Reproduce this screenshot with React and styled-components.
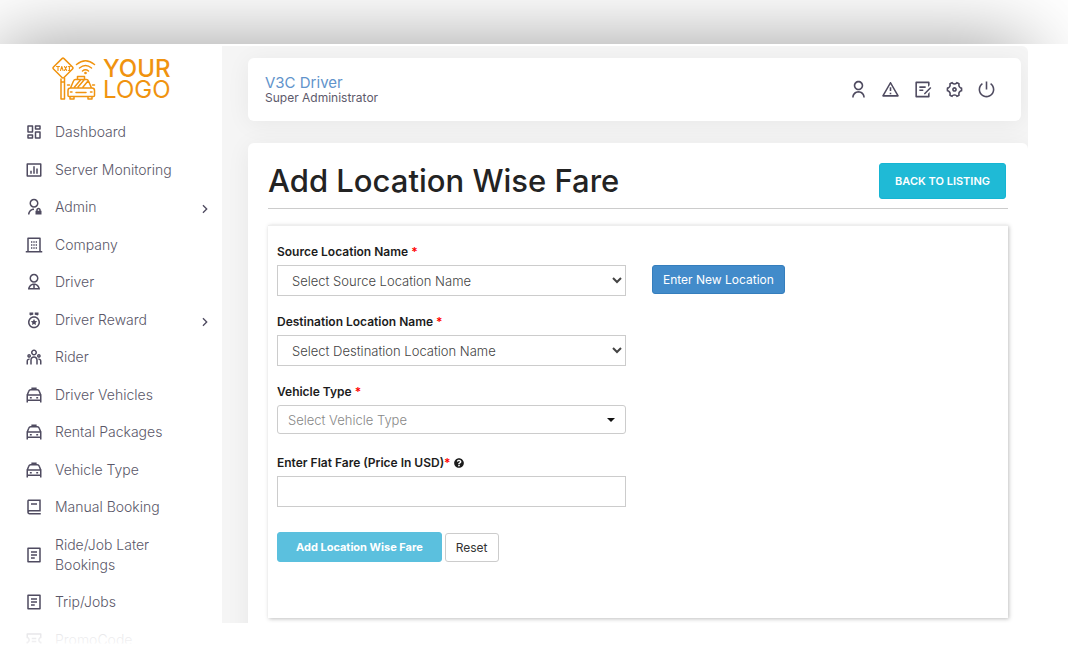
import { useState } from "react";
import styled, { createGlobalStyle } from "styled-components";
import {
  RiDashboardLine,
  RiBarChartBoxLine,
  RiAdminLine,
  RiUser2Line,
  RiMedalLine,
  RiTeamLine,
  RiTaxiLine,
  RiBook2Line,
  RiFileList2Line,
  RiCouponLine,
  RiArrowRightSLine,
  RiUserLine,
  RiAlertLine,
  RiDraftLine,
  RiSettings4Line,
  RiShutDownLine,
} from "react-icons/ri";
import { FaQuestionCircle } from "react-icons/fa";

const GlobalStyle = createGlobalStyle`
  * {
    box-sizing: border-box;
  }
  body {
    margin: 0;
    background: #fff;
    font-family: Inter, "Noto Sans", sans-serif;
    color: #1c1c1c;
  }
  button, input, select {
    font-family: inherit;
  }
`;

const Page = styled.div`
  position: relative;
  height: 100vh;
  overflow: hidden;
`;

// only the upper part of the window shadow is shown
const TopShade = styled.div`
  height: 44px;
  padding: 44px 40px 0 0;
  overflow: hidden;

  &::after {
    content: "";
    display: block;
    height: 200px;
    box-shadow: 0 0 80px rgba(0, 0, 0, 0.4);
  }
`;

const Shell = styled.div`
  display: grid;
  grid-template-columns: 222px 1fr;
  padding-right: 40px;
`;

const BottomFade = styled.div`
  position: absolute;
  left: 0;
  right: 0;
  bottom: 0;
  height: 41px;
  background: linear-gradient(to bottom, rgba(255, 255, 255, 0.8), rgba(255, 255, 255, 0.92) 20px, #fff 21px);
  pointer-events: none;
`;

const Sidebar = styled.aside`
  background: #fff;
`;

const Logo = styled.a`
  display: flex;
  align-items: center;
  gap: 7px;
  height: 70px;
  padding-left: 52px;
  color: #f0930f;
  font-size: 24px;
  font-weight: 500;
  line-height: 21px;
  text-decoration: none;

  small {
    display: block;
    font-size: 24px;
    font-weight: 400;
  }
`;

const Menu = styled.ul`
  display: flex;
  flex-direction: column;
  justify-content: space-between;
  min-height: 544px;
  margin: 0;
  padding: 0;
  list-style: none;
`;

const MenuLink = styled.a`
  display: flex;
  align-items: center;
  gap: 12px;
  padding: 8px 9px 8px 25px;
  color: #5a5768;
  font-size: 14px;
  font-weight: 300;
  line-height: 20px;
  text-decoration: none;

  svg {
    flex: none;
    color: #4f4b60;
  }
  span {
    flex: 1;
    max-width: 120px;
  }
`;

const Arrow = styled(RiArrowRightSLine)`
  margin: 4px 0 0 auto;
`;

const Content = styled.main`
  height: 577px;
  margin-top: 2px;
  padding: 12px 0 0 26px;
  border-top-right-radius: 6px;
  background: #f5f5f5;
  overflow: hidden;
`;

const Header = styled.header`
  display: flex;
  align-items: center;
  justify-content: space-between;
  height: 63px;
  margin-right: 7px;
  padding: 0 25px 0 17px;
  border-radius: 6px;
  background: #fff;
  box-shadow: 0 3px 24px rgba(0, 0, 0, 0.06);
`;

const UserName = styled.a`
  display: block;
  color: #6193cb;
  font-size: 15px;
  line-height: 16px;
  text-decoration: none;
`;

const Role = styled.div`
  color: #5d5a6b;
  font-size: 12px;
  line-height: 14px;
`;

const Tools = styled.div`
  display: flex;
  gap: 13px;
`;

const ToolButton = styled.button`
  display: flex;
  padding: 0;
  border: 0;
  background: none;
  color: #4f4b60;
`;

const Card = styled.section`
  min-height: 520px;
  margin-top: 22px;
  padding: 20px 20px 0;
  border-radius: 6px;
  background: #fff;
  box-shadow: 0 3px 24px rgba(0, 0, 0, 0.06);
`;

const CardHead = styled.div`
  display: flex;
  align-items: center;
  justify-content: space-between;
  height: 46px;
  padding: 0 2px 9px 0;
  border-bottom: 1px solid #ccc;

  h1 {
    margin: 0;
    color: #232323;
    font-size: 31px;
    font-weight: 500;
    line-height: 36px;
  }
`;

const BackButton = styled.button`
  height: 36px;
  padding: 0 15px;
  border: 1px solid #15b5d3;
  border-radius: 3px;
  background: #1fbad6;
  color: #fff;
  font-size: 11px;
  font-weight: 600;
`;

const Form = styled.form`
  min-height: 393px;
  margin-top: 16px;
  padding: 16px 9px;
  border-top: 1px solid #eee;
  background: #fff;
  box-shadow: 1px 1px 4px rgba(0, 0, 0, 0.25);
`;

const Field = styled.div`
  margin-bottom: 16px;
`;

const Label = styled.label`
  display: block;
  margin-bottom: 3px;
  font-size: 12px;
  font-weight: 600;
  line-height: 20px;

  svg {
    vertical-align: -1px;
  }
`;

const Star = styled.span`
  color: #f00;
`;

const Row = styled.div`
  display: flex;
  gap: 26px;
`;

const Control = styled.select`
  display: block;
  width: 349px;
  height: 31px;
  padding: 0 10px;
  border: 1px solid #ccc;
  border-radius: 0;
  background: #fff;
  color: #444;
  font-size: 13px;
  font-weight: 300;
`;

const PickerWrap = styled.div`
  position: relative;
  width: 349px;
  min-height: 32px;

  &::after {
    content: "";
    position: absolute;
    top: 13px;
    right: 11px;
    border: 4px solid transparent;
    border-top-color: #111;
    border-bottom: 0;
    pointer-events: none;
  }
`;

const Picker = styled(Control)`
  height: 29px;
  border-radius: 3px;
  color: #888;
  appearance: none;
`;

const Button = styled.button`
  height: ${({ $bold }) => ($bold ? 30 : 29)}px;
  padding: 0 ${({ $bold }) => ($bold ? 18 : 10)}px;
  border: 1px solid ${({ $line }) => $line};
  border-radius: 3px;
  background: ${({ $fill }) => $fill};
  color: ${({ $ink }) => $ink || "#fff"};
  font-size: ${({ $bold }) => ($bold ? 11 : 12)}px;
  font-weight: ${({ $bold }) => ($bold ? 700 : 400)};
`;

const Actions = styled.div`
  display: flex;
  align-items: flex-end;
  gap: 3px;
  margin-top: 25px;
`;

function TaxiLogo() {
  return (
    <svg width="44" height="44" viewBox="0 0 44 44" fill="none" stroke="currentColor" strokeWidth="1.5" strokeLinejoin="round" strokeLinecap="round">
      <path d="M10 1.600Q11 .6 12 1.600L20.500 10Q21.500 11 20.500 12L12 20.500Q11 21.500 10 20.500L1.500 12Q.5 11 1.500 10Z" />
      <path d="M4.500 9.500h3M6 9.500v4M8.500 13.500l1.300-4 1.300 4M12.500 9.500l2.200 4M14.700 9.500l-2.200 4M16.500 9.500h1.800M16.500 13.500h1.800M17.400 9.500v4" strokeWidth="1.1" />
      <path d="M9 22v20h3.500V21M9 25h3" />
      <path d="M24.500 7.500q9-7.500 18 0M27.500 11q6-5 12 0M30.500 14q3-2.500 6 0" />
      <circle cx="33.500" cy="16" r=".6" fill="currentColor" />
      <path d="M25.500 22.500v-3h7v3M18.500 31l3-7q.6-1.500 2-1.500h11q1.400 0 2 1.500l3 7M16 33.500q0-2.500 2.500-2.500h21.500q2.500 0 2.500 2.500v5q0 1-1 1h-24.500q-1 0-1-1zM15.500 28h2M40.500 28h2M18 40v2h4v-2M36 40v2h4v-2M24 35.500h10M18.500 35h1.500M38.500 35h1.500M22.500 30l6-7M26 30l6-7M31 30l5-6" />
    </svg>
  );
}

function CompanyIcon({ size }) {
  return (
    <svg width={size} height={size} viewBox="0 0 24 24" fill="currentColor">
      <path d="M21 20h2v2H1v-2h2V3a1 1 0 0 1 1-1h16a1 1 0 0 1 1 1v17zm-2 0V4H5v16h14z" />
      <path d="M8 7h1.800v2H8zM11.100 7h1.800v2h-1.800zM14.200 7h1.800v2h-1.800zM8 11h1.800v2H8zM11.100 11h1.800v2h-1.800zM14.200 11h1.800v2h-1.800zM8 15h1.800v2H8zM11.100 15h1.800v2h-1.800zM14.200 15h1.800v2h-1.800z" />
    </svg>
  );
}

function CabIcon({ size }) {
  return (
    <svg width={size} height={size} viewBox="0 0 24 24" fill="none" stroke="currentColor" strokeWidth="2">
      <path d="M8.500 3h7M3 12l2-5q.7-2 2.600-2h8.800q1.900 0 2.600 2l2 5M2 12h20M3 12v10M21 12v10M3 19h18M6.500 15.500h2.500M15 15.500h2.500" />
    </svg>
  );
}

const menuItems = [
  { label: "Dashboard", Icon: RiDashboardLine },
  { label: "Server Monitoring", Icon: RiBarChartBoxLine },
  { label: "Admin", Icon: RiAdminLine, more: true },
  { label: "Company", Icon: CompanyIcon },
  { label: "Driver", Icon: RiUser2Line },
  { label: "Driver Reward", Icon: RiMedalLine, more: true },
  { label: "Rider", Icon: RiTeamLine },
  { label: "Driver Vehicles", Icon: CabIcon },
  { label: "Rental Packages", Icon: CabIcon },
  { label: "Vehicle Type", Icon: CabIcon },
  { label: "Manual Booking", Icon: RiBook2Line },
  { label: "Ride/Job Later Bookings", Icon: RiFileList2Line },
  { label: "Trip/Jobs", Icon: RiFileList2Line },
  { label: "PromoCode", Icon: RiCouponLine },
];

const tools = [
  { label: "Profile", Icon: RiUserLine },
  { label: "Alerts", Icon: RiAlertLine },
  { label: "Notes", Icon: RiDraftLine },
  { label: "Settings", Icon: RiSettings4Line },
  { label: "Log out", Icon: RiShutDownLine },
];

function App() {
  const [fare, setFare] = useState("");

  return (
    <Page>
      <GlobalStyle />
      <TopShade />
      <Shell>
        <Sidebar>
          <Logo href="#">
            <TaxiLogo />
            <span>
              YOUR
              <small>LOGO</small>
            </span>
          </Logo>
          <Menu>
            {menuItems.map(({ label, Icon, more }) => (
              <li key={label}>
                <MenuLink href="#">
                  <Icon size={18} />
                  <span>{label}</span>
                  {more && <Arrow size={16} />}
                </MenuLink>
              </li>
            ))}
          </Menu>
        </Sidebar>

        <Content>
          <Header>
            <div>
              <UserName href="#">V3C Driver</UserName>
              <Role>Super Administrator</Role>
            </div>
            <Tools>
              {tools.map(({ label, Icon }) => (
                <ToolButton key={label} type="button" aria-label={label}>
                  <Icon size={19} />
                </ToolButton>
              ))}
            </Tools>
          </Header>

          <Card>
            <CardHead>
              <h1>Add Location Wise Fare</h1>
              <BackButton type="button">BACK TO LISTING</BackButton>
            </CardHead>

            <Form onSubmit={(e) => e.preventDefault()}>
              <Field>
                <Label htmlFor="source">Source Location Name <Star>*</Star></Label>
                <Row>
                  <Control id="source">
                    <option>Select Source Location Name</option>
                  </Control>
                  <Button type="button" $fill="#428bca" $line="#357ebd">Enter New Location</Button>
                </Row>
              </Field>
              <Field>
                <Label htmlFor="destination">Destination Location Name <Star>*</Star></Label>
                <Control id="destination">
                  <option>Select Destination Location Name</option>
                </Control>
              </Field>
              <Field>
                <Label htmlFor="vehicle">Vehicle Type <Star>*</Star></Label>
                <PickerWrap>
                  <Picker id="vehicle">
                    <option>Select Vehicle Type</option>
                  </Picker>
                </PickerWrap>
              </Field>
              <Field>
                <Label htmlFor="fare">
                  Enter Flat Fare (Price In USD)<Star>*</Star> <FaQuestionCircle size={10} />
                </Label>
                <Control as="input" id="fare" type="text" value={fare} onChange={(e) => setFare(e.target.value)} />
              </Field>
              <Actions>
                <Button type="submit" $fill="#5bc0de" $line="#5bc0de" $bold>Add Location Wise Fare</Button>
                <Button type="reset" $fill="#fff" $line="#ccc" $ink="#333" onClick={() => setFare("")}>Reset</Button>
              </Actions>
            </Form>
          </Card>
        </Content>
      </Shell>
      <BottomFade />
    </Page>
  );
}

export default App;
